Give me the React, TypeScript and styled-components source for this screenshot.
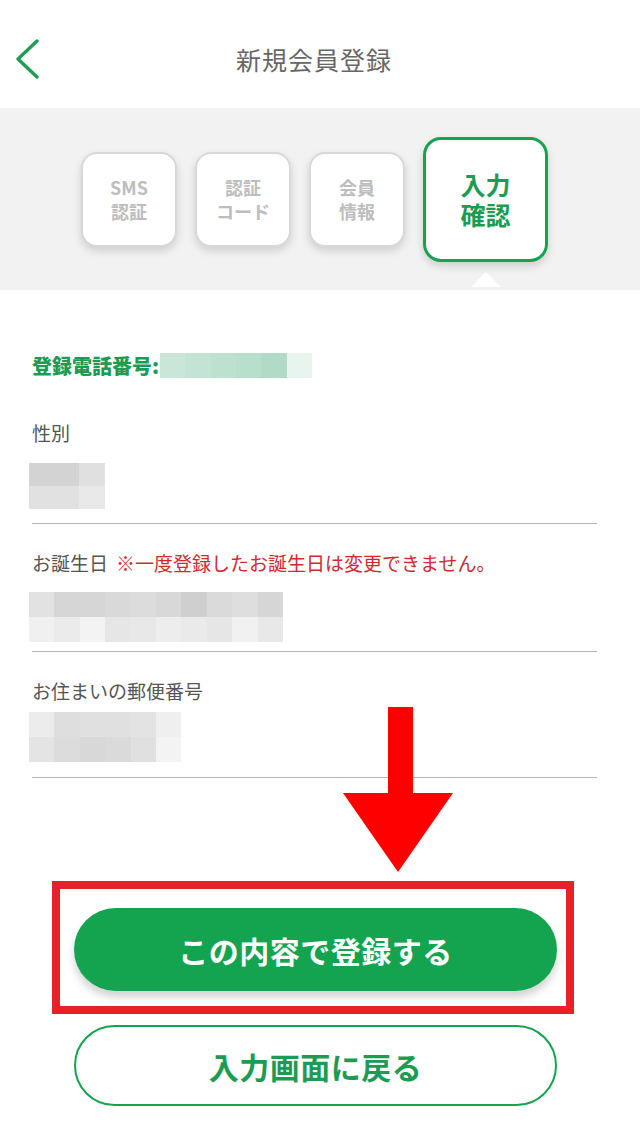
import React from "react";
import styled, { createGlobalStyle } from "styled-components";

const color = {
  green: "#14a44f",
  greenText: "#1c9c52",
  title: "#666666",
  label: "#555555",
  note: "#d02a2f",
  band: "#f2f2f2",
  line: "#b4b4b4",
  stepLine: "#d8d8d8",
  stepText: "#bdbdbd",
  red: "#ff0000",
  frame: "#e62129",
};

const GlobalStyle = createGlobalStyle`
  html, body {
    margin: 0;
    padding: 0;
    background: #ffffff;
  }
  body {
    font-family: "Noto Sans CJK JP", "Noto Sans", sans-serif;
  }
`;

const Page = styled.div`
  position: relative;
  width: 640px;
  min-height: 1123px;
  background: #fff;
  overflow: hidden;
`;

/* header */
const Header = styled.header`
  box-sizing: border-box;
  height: 108px;
  padding-top: 10px;
  display: grid;
  grid-template-columns: 60px 1fr 60px;
  align-items: center;
`;

const BackButton = styled.button`
  display: flex;
  align-items: center;
  width: 60px;
  height: 60px;
  padding: 0 0 0 14px;
  border: 0;
  background: none;
`;

const Title = styled.h1`
  margin: 0;
  text-align: center;
  font-size: 25px;
  font-weight: 400;
  letter-spacing: 1px;
  color: ${color.title};
  transform: translateX(-6px);
`;

/* step indicator */
const StepBand = styled.nav`
  position: relative;
  height: 182px;
  background: ${color.band};
  display: flex;
  align-items: center;
  gap: 18px;
  padding-left: 81px;
`;

const Step = styled.div<{ $active?: boolean }>`
  position: relative;
  box-sizing: border-box;
  width: ${(p) => (p.$active ? 125 : 96)}px;
  height: ${(p) => (p.$active ? 125 : 95)}px;
  display: flex;
  flex-direction: column;
  align-items: center;
  justify-content: center;
  background: #fff;
  border: ${(p) => (p.$active ? `3px solid ${color.green}` : `2px solid ${color.stepLine}`)};
  border-radius: ${(p) => (p.$active ? 18 : 16)}px;
  box-shadow: 0 4px 8px rgba(0, 0, 0, 0.15);
  color: ${(p) => (p.$active ? color.greenText : color.stepText)};
  font-size: ${(p) => (p.$active ? 25 : 18)}px;
  font-weight: 700;
`;

const StepLine = styled.span<{ $active?: boolean }>`
  display: block;
  line-height: ${(p) => (p.$active ? 30 : 24)}px;
`;

const Pointer = styled.span`
  position: absolute;
  left: 50%;
  bottom: -28px;
  transform: translateX(-50%);
  width: 0;
  height: 0;
  border-left: 15px solid transparent;
  border-right: 15px solid transparent;
  border-bottom: 15px solid #fff;
`;

/* confirmation body */
const Body = styled.section`
  padding: 63px 43px 0 32px;
`;

const PhoneRow = styled.div`
  display: flex;
  align-items: center;
  height: 25px;
  font-size: 20px;
  font-weight: 900;
  color: ${color.greenText};
  margin-bottom: 42px;
`;

const Field = styled.div<{ $after: number }>`
  display: flex;
  flex-direction: column;
  align-items: flex-start;
  padding-bottom: ${(p) => p.$after}px;
  border-bottom: 1.5px solid ${color.line};
  margin-bottom: 26px;
`;

const Label = styled.div<{ $gap: number }>`
  font-size: 19px;
  line-height: 26px;
  color: ${color.label};
  margin-bottom: ${(p) => p.$gap}px;
`;

const Note = styled.span`
  color: ${color.note};
  margin-left: 8px;
`;

const Mosaic = styled.div<{ $cols: string; $rowH: number }>`
  display: grid;
  grid-template-columns: ${(p) => p.$cols};
  grid-auto-rows: ${(p) => p.$rowH}px;
  margin-left: -3px;
`;

const Cell = styled.span<{ $bg: string }>`
  background: ${(p) => p.$bg};
`;

const PhoneMosaic = styled(Mosaic)`
  margin-left: 1px;
`;

/* actions */
const Actions = styled.div`
  display: flex;
  flex-direction: column;
  align-items: flex-start;
  padding: 77px 0 0 52px;
  gap: 11px;
`;

const Highlight = styled.div`
  box-sizing: border-box;
  width: 522px;
  padding: 19px 0 15px 14px;
  border: 8px solid ${color.frame};
`;

const PrimaryButton = styled.button`
  width: 483px;
  height: 83px;
  border: 0;
  border-radius: 42px;
  background: ${color.green};
  color: #fff;
  font-family: inherit;
  font-size: 30px;
  font-weight: 700;
  letter-spacing: 0.5px;
  box-shadow: 0 6px 9px rgba(0, 0, 0, 0.18);
`;

const SecondaryButton = styled.button`
  width: 483px;
  height: 81px;
  margin-left: 22px;
  border: 2px solid ${color.green};
  border-radius: 41px;
  background: #fff;
  color: ${color.greenText};
  font-family: inherit;
  font-size: 30px;
  font-weight: 700;
  letter-spacing: 0.5px;
`;

const DownArrow = styled.svg`
  position: absolute;
  left: 343px;
  top: 707px;
`;

type Grid = { cols: string; rowH: number; cells: string[] };

const mosaics: Record<string, Grid> = {
  phone: {
    cols: "repeat(6, 25.3px)",
    rowH: 25,
    cells: ["#c9e6d8", "#c3e4d4", "#bde0cf", "#b7dfcb", "#b2dbc7", "#e8f4ee"],
  },
  sex: {
    cols: "50px 26px",
    rowH: 23,
    cells: ["#d3d3d3", "#e0e0e0", "#e1e1e1", "#e9e9e9"],
  },
  birthday: {
    cols: "repeat(10, 25.4px)",
    rowH: 25,
    cells: [
      "#e2e2e2", "#d6d6d6", "#d6d6d6", "#d9d9d9", "#dcdcdc",
      "#d8d8d8", "#cfcfcf", "#dadada", "#dedede", "#d6d6d6",
      "#f0f0f0", "#ebebeb", "#f3f3f3", "#e6e6e6", "#e8e8e8",
      "#ededed", "#eaeaea", "#e6e6e6", "#f1f1f1", "#e8e8e8",
    ],
  },
  postal: {
    cols: "repeat(6, 25.4px)",
    rowH: 25,
    cells: [
      "#ececec", "#dedede", "#e0e0e0", "#e0e0e0", "#e3e3e3", "#efefef",
      "#e4e4e4", "#dcdcdc", "#d8d8d8", "#dadada", "#e0e0e0", "#f3f3f3",
    ],
  },
};

const Blur: React.FC<{ g: Grid; phone?: boolean }> = ({ g, phone }) => {
  const Box = phone ? PhoneMosaic : Mosaic;
  return (
    <Box $cols={g.cols} $rowH={g.rowH} aria-hidden>
      {g.cells.map((c, i) => (
        <Cell key={i} $bg={c} />
      ))}
    </Box>
  );
};

const steps = [
  { id: 0, lines: ["SMS", "認証"] },
  { id: 1, lines: ["認証", "コード"] },
  { id: 2, lines: ["会員", "情報"] },
  { id: 3, lines: ["入力", "確認"], active: true },
];

export default function App() {
  return (
    <Page>
      <GlobalStyle />
      <Header>
        <BackButton aria-label="戻る">
          <svg width="26" height="40" viewBox="0 0 26 40">
            <polyline
              points="23,2 4,20 23,38"
              fill="none"
              stroke="#1f9d55"
              strokeWidth="3.4"
              strokeLinecap="round"
              strokeLinejoin="round"
            />
          </svg>
        </BackButton>
        <Title>新規会員登録</Title>
        <span />
      </Header>

      <StepBand aria-label="登録ステップ">
        {steps.map((s) => (
          <Step key={s.id} $active={s.active}>
            {s.lines.map((l) => (
              <StepLine key={l} $active={s.active}>
                {l}
              </StepLine>
            ))}
            {s.active && <Pointer />}
          </Step>
        ))}
      </StepBand>

      <Body>
        <PhoneRow>
          登録電話番号:
          <Blur g={mosaics.phone} phone />
        </PhoneRow>

        <Field $after={14}>
          <Label $gap={17}>性別</Label>
          <Blur g={mosaics.sex} />
        </Field>

        <Field $after={9}>
          <Label $gap={16}>
            お誕生日<Note>※一度登録したお誕生日は変更できません。</Note>
          </Label>
          <Blur g={mosaics.birthday} />
        </Field>

        <Field $after={15}>
          <Label $gap={8}>お住まいの郵便番号</Label>
          <Blur g={mosaics.postal} />
        </Field>
      </Body>

      <Actions>
        <Highlight>
          <PrimaryButton>この内容で登録する</PrimaryButton>
        </Highlight>
        <SecondaryButton>入力画面に戻る</SecondaryButton>
      </Actions>

      <DownArrow width="110" height="166" viewBox="0 0 110 166" aria-hidden>
        <rect x="45" y="0" width="25" height="87" fill={color.red} />
        <polygon points="0,86 110,86 55,165" fill={color.red} />
      </DownArrow>
    </Page>
  );
}
